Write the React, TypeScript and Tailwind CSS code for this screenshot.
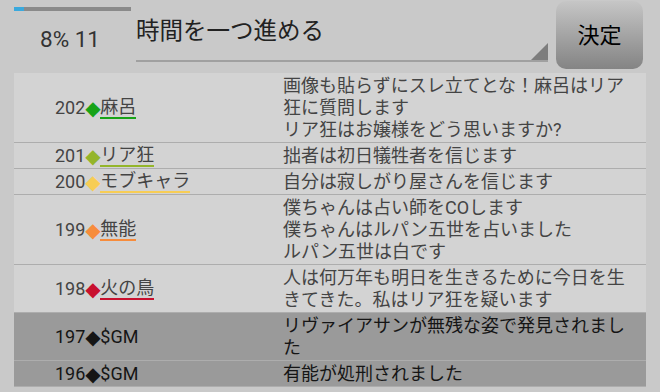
import React from 'react';

interface Entry {
  no: number;
  name: string;
  color: string; // diamond + underline colour, "" for GM
  lines: string[];
  gm?: boolean;
}

const entries: Entry[] = [
  {
    no: 202,
    name: '麻呂',
    color: '#17a317',
    lines: ['画像も貼らずにスレ立てとな！麻呂はリア', '狂に質問します', 'リア狂はお嬢様をどう思いますか?'],
  },
  { no: 201, name: 'リア狂', color: '#94b52a', lines: ['拙者は初日犠牲者を信じます'] },
  { no: 200, name: 'モブキャラ', color: '#f7cd55', lines: ['自分は寂しがり屋さんを信じます'] },
  {
    no: 199,
    name: '無能',
    color: '#f78c3c',
    lines: ['僕ちゃんは占い師をCOします', '僕ちゃんはルパン五世を占いました', 'ルパン五世は白です'],
  },
  {
    no: 198,
    name: '火の鳥',
    color: '#c8102e',
    lines: ['人は何万年も明日を生きるために今日を生', 'きてきた。私はリア狂を疑います'],
  },
  { no: 197, name: '$GM', color: '', gm: true, lines: ['リヴァイアサンが無残な姿で発見されまし', 'た'] },
  { no: 196, name: '$GM', color: '', gm: true, lines: ['有能が処刑されました'] },
];

function Row({ e }: { e: Entry }) {
  return (
    <div
      className={
        e.gm
          ? 'flex border-b border-[#adadad] bg-[#9a9a9a] text-[#151515]'
          : 'flex border-b border-[#adadad] bg-[#d3d3d3] text-[#444444]'
      }
    >
      <div className="flex w-[269px] items-center pl-[41px] leading-[22px] whitespace-nowrap">
        <span>{e.no}</span>
        <span
          style={{ color: e.gm ? '#151515' : e.color }}
          className="inline-block w-[15px] text-center font-['DejaVu_Sans'] text-[20px] leading-[22px]"
        >
          ◆
        </span>
        {e.gm ? (
          <span>{e.name}</span>
        ) : (
          <span className="inline-block border-b-2 leading-[20px]" style={{ borderColor: e.color }}>
            {e.name}
          </span>
        )}
      </div>
      <div className="flex-1 py-[1.5px] leading-[22px] whitespace-nowrap">
        {e.lines.map((l, i) => (
          <div key={i}>{l}</div>
        ))}
      </div>
    </div>
  );
}

export default function App() {
  return (
    <div className="h-[392px] w-[660px] overflow-hidden bg-[#c9c9c9] font-['Roboto','Noto_Sans_CJK_JP',sans-serif] text-[18px]">
      {/* header */}
      <div className="flex h-[73px] items-start">
        <div className="w-[136px] pt-[7px] pl-[14px]">
          <div className="h-[4px] w-[117px] bg-[#8a8a8a]">
            <div className="h-full w-[10px] bg-[#3aa9dd]" />
          </div>
          <div className="mt-[17px] pl-[26px] text-[22.5px] leading-none text-[#333333]">8% 11</div>
        </div>
        <div className="relative h-[62px] w-[412px] border-b-2 border-[#a0a0a0] pt-[16px] text-[23.5px] leading-[30px] text-[#222222]">
          時間を一つ進める
          <svg className="absolute right-0 bottom-0" width="17" height="17" viewBox="0 0 17 17">
            <polygon points="17,0 17,17 0,17" fill="#7d7d7d" />
          </svg>
        </div>
        <div className="mt-[1px] ml-[8px] flex h-[68px] w-[87px] items-center justify-center rounded-[10px] bg-gradient-to-b from-[#c6c6c6] to-[#848484] text-[22px] text-black">
          決定
        </div>
      </div>
      {/* log */}
      <div className="mx-[14px]">
        {entries.map((e) => (
          <Row key={e.no} e={e} />
        ))}
      </div>
    </div>
  );
}
